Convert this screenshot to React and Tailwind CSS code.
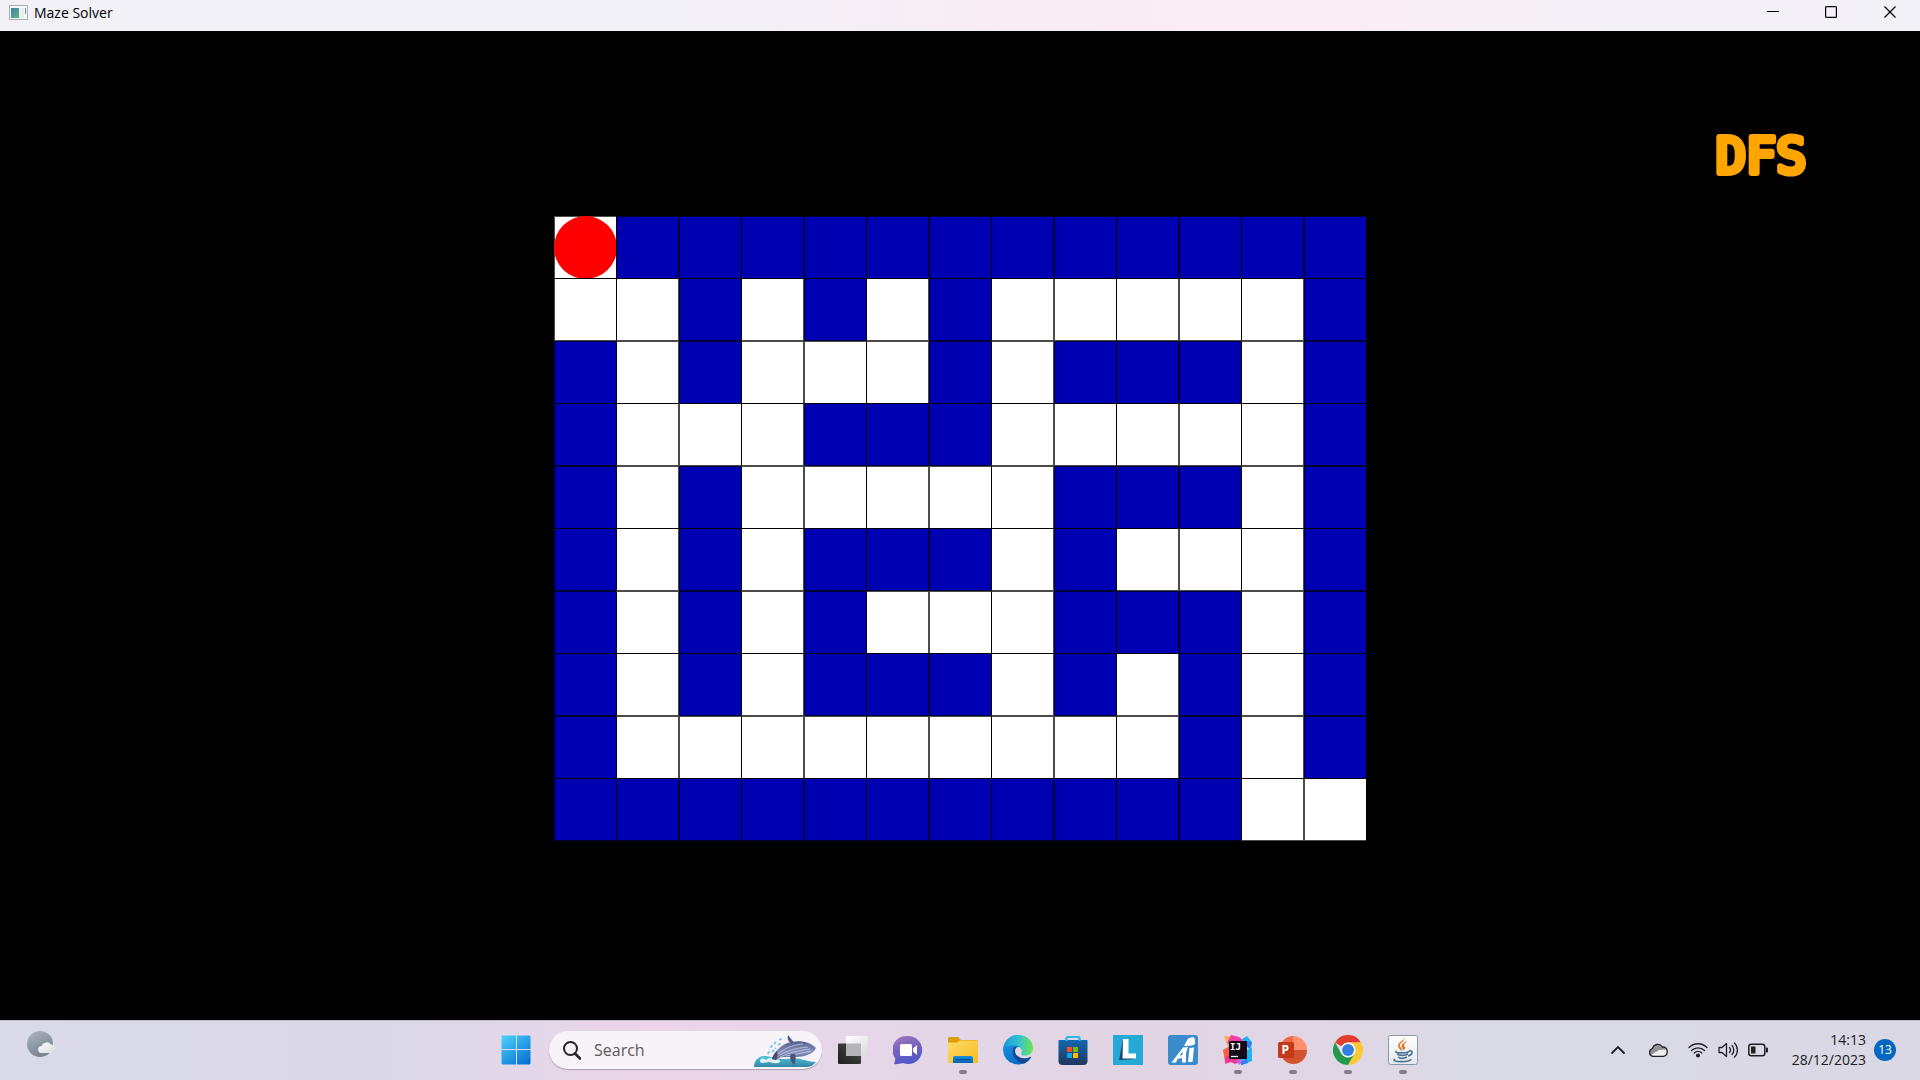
import React from "react";

const MAZE = [
  "0111111111111",
  "0010101000001",
  "1010001011101",
  "1000111000001",
  "1010000011101",
  "1010111010001",
  "1010100011101",
  "1010111010101",
  "1000000000101",
  "1111111111100",
];

function Cell({ row, col, wall }) {
  const vertical = col % 2 ? "border-l border-r border-l-black border-r-black/70" : "border-l border-l-black/70";
  const horizontal = row % 2 ? "border-t border-b border-t-black border-b-black/70" : "border-t border-t-black/70";
  return (
    <div className={`${wall ? "bg-[#0000b3]" : "bg-white"} ${vertical} ${horizontal} relative`}>
      {row === 0 && col === 0 && <div className="absolute -inset-px rounded-full bg-[#ff0000]" />}
    </div>
  );
}

function TitleBar() {
  return (
    <header className="flex h-[31px] items-start bg-[linear-gradient(90deg,#f3f1f8_0%,#f3f1f8_35%,#f8edf5_52%,#fbedf5_68%,#f5f0f7_82%,#f3f1f8_100%)]">
      <div className="flex h-[25px] flex-1 items-center gap-1.5 pl-[9px]">
        <svg width="19" height="15" viewBox="0 0 19 15" aria-hidden="true">
          <defs>
            <linearGradient id="app" x1="0" y1="0" x2="1" y2="1">
              <stop offset="0" stopColor="#4b80a8" />
              <stop offset="1" stopColor="#56b584" />
            </linearGradient>
          </defs>
          <rect x="0.5" y="0.5" width="18" height="14" fill="#f6f8f8" stroke="#a9b0b8" />
          <rect x="2" y="3" width="8" height="10" fill="url(#app)" />
          <rect x="11" y="3" width="4" height="10" fill="#e9eeee" />
          <rect x="16" y="3" width="1" height="6" fill="#55a08c" />
        </svg>
        <h1 className="text-[14px] leading-5 text-black">Maze Solver</h1>
      </div>
      <button aria-label="Minimize" className="grid h-6 w-[58px] place-items-center">
        <svg width="12" height="12" viewBox="0 0 12 12"><path d="M0 5.5h12" stroke="#000" /></svg>
      </button>
      <button aria-label="Maximize" className="grid h-6 w-[58px] place-items-center">
        <svg width="12" height="12" viewBox="0 0 12 12"><rect x="0.6" y="0.6" width="10.8" height="10.8" rx="1" fill="none" stroke="#000" strokeWidth="1.2" /></svg>
      </button>
      <button aria-label="Close" className="grid h-6 w-[60px] place-items-center">
        <svg width="12" height="12" viewBox="0 0 12 12"><path d="M0.5 0.5l11 11M11.5 0.5l-11 11" stroke="#000" strokeWidth="1.2" /></svg>
      </button>
    </header>
  );
}

function TaskButton({ label, running, children }) {
  return (
    <button aria-label={label} className="relative grid h-[60px] w-[55px] place-items-center">
      <svg width="30" height="30" viewBox="0 0 30 30" aria-hidden="true">{children}</svg>
      {running && <span className="absolute bottom-1.5 left-1/2 h-1 w-2 -translate-x-1/2 rounded-full bg-[#857c88]" />}
    </button>
  );
}

function Whale() {
  return (
    <svg width="64" height="32" viewBox="0 0 64 32" aria-hidden="true">
      <defs>
        <linearGradient id="sea" x1="0" y1="0" x2="0" y2="1">
          <stop offset="0" stopColor="#4cc6d8" />
          <stop offset="1" stopColor="#3585a8" />
        </linearGradient>
        <linearGradient id="whale" x1="0" y1="0" x2="0" y2="1">
          <stop offset="0" stopColor="#57618f" />
          <stop offset="0.6" stopColor="#8793bd" />
          <stop offset="1" stopColor="#4a5282" />
        </linearGradient>
      </defs>
      <path d="M0 32c0-6 4-11 11-11 7 0 9 3 17 3 9 0 12-1 18 0 6 1 10 3 16 3-2 3-6 5-10 5z" fill="url(#sea)" />
      <path d="M6 26c0-3 4-3 6-1 3-3 8-3 9 0 2-1 6 0 5 2-5 3-9 0-11 0s-4 1-6 1-3-1-3-2z" fill="#e2f2f8" />
      <path d="M14 19l2-4M17 13l1-3M20 9l3-3M25 5l4-2M18 17l4-4M24 10l4-2" stroke="#78c6ee" strokeWidth="1.8" strokeDasharray="3 1.5" fill="none" />
      <path d="M38 8c-4-1-5-4-4-8 2 2 4 5 6 8z" fill="#525a86" />
      <path d="M18 24c2-7 9-15 19-17 11-2 20 1 25 6-2 6-12 9-21 9-9 0-16-1-19 3z" fill="url(#whale)" />
      <path d="M22 21c6-6 14-11 27-12M23 22c7-5 17-9 31-10M26 22c9-4 19-7 30-8M32 21c8-1 16-3 25-5" stroke="#c3cae3" strokeWidth="0.8" fill="none" />
      <path d="M18 24c1-4 3-6 5-8 1 3 1 5-1 9z" fill="#464a75" />
      <path d="M37 19c-2 4 0 8 3 11 2-4 2-8 1-11z" fill="#4b527e" />
    </svg>
  );
}

function Taskbar() {
  return (
    <footer className="grid h-[60px] grid-cols-[1fr_auto_1fr] items-center bg-[linear-gradient(90deg,#dbdae8_0%,#dad8e7_20%,#e2d7e8_28%,#ecd5e8_34%,#e5d7e8_43%,#e1d5e4_58%,#e1d6e5_68%,#dadae5_76%,#d9d8e4_100%)] shadow-[inset_0_1px_0_#c2bcc8]">
      <button aria-label="Weather" className="mb-3 ml-[27px] justify-self-start">
        <svg width="28" height="26" viewBox="0 0 28 26">
          <defs>
            <linearGradient id="moon" x1="0" y1="0" x2="0.5" y2="1"><stop offset="0" stopColor="#aeb7c2" /><stop offset="1" stopColor="#788390" /></linearGradient>
            <linearGradient id="mist" x1="0" y1="0" x2="1" y2="1"><stop offset="0" stopColor="#fff" /><stop offset="1" stopColor="#d8dde2" /></linearGradient>
          </defs>
          <circle cx="13" cy="13" r="13" fill="url(#moon)" />
          <path d="M15 22a3.5 3.5 0 0 1-.5-7 5.500 5.500 0 0 1 9.500-1.500 4.300 4.300 0 0 1 .5 8.500z" fill="url(#mist)" />
        </svg>
      </button>

      <nav aria-label="Taskbar" className="flex items-center pr-0.5">
        <TaskButton label="Start">
          <defs><linearGradient id="win" gradientUnits="userSpaceOnUse" x1="0" y1="0" x2="24" y2="30"><stop offset="0" stopColor="#50d4ff" /><stop offset="1" stopColor="#0673d3" /></linearGradient></defs>
          <path d="M1.500 0.500H15V14H0.500V1.500zM16 0.500H28.500L29.500 1.500V14H16zM0.500 15H15V29.500H1.500L0.500 28.500zM16 15H29.500V28.500L28.500 29.500H16z" fill="url(#win)" />
        </TaskButton>

        <label className="mr-[3px] ml-1.5 flex h-[38px] w-[273px] items-center overflow-hidden rounded-full bg-[#f8f2f9] pl-3.5 shadow-[0_1px_1px_#a99fb0]">
          <svg width="18" height="19" viewBox="0 0 18 19" aria-hidden="true">
            <circle cx="7.500" cy="7.500" r="6.500" fill="none" stroke="#252329" strokeWidth="2" />
            <path d="M12 12.500l5 5" stroke="#252329" strokeWidth="2.600" strokeLinecap="round" />
          </svg>
          <input aria-label="Search" placeholder="Search" className="ml-[13px] min-w-0 flex-1 bg-transparent text-[16px] text-[#5d5960] outline-none placeholder:text-[#5d5960]" />
          <span className="mr-1 self-end pb-0.5"><Whale /></span>
        </label>

        <TaskButton label="Task view">
          <defs>
            <linearGradient id="tv1" x1="0" y1="1" x2="1" y2="0"><stop offset="0" stopColor="#1f1f1f" /><stop offset="1" stopColor="#4c4c4c" /></linearGradient>
            <linearGradient id="tv2" x1="0" y1="0" x2="1" y2="1"><stop offset="0" stopColor="#fff" /><stop offset="1" stopColor="#dcd9de" /></linearGradient>
          </defs>
          <rect x="0" y="8.500" width="23" height="20.500" rx="1" fill="url(#tv1)" />
          <rect x="8" y="1" width="22" height="20" rx="1" fill="url(#tv2)" />
          <rect x="8" y="8.500" width="15" height="12.500" fill="#b5b4b6" />
        </TaskButton>

        <TaskButton label="Chat">
          <defs><linearGradient id="chat" x1="0" y1="0" x2="0.300" y2="1"><stop offset="0" stopColor="#a377bd" /><stop offset="0.500" stopColor="#7964be" /><stop offset="1" stopColor="#5059c9" /></linearGradient></defs>
          <path d="M15 1a14 14 0 1 1-5 27c-3 1-7 1.500-9 1 1-2 1.500-4 1-6A14 14 0 0 1 15 1z" fill="url(#chat)" />
          <rect x="7" y="9" width="12" height="12" rx="1.500" fill="#fff" />
          <path d="M20 13.500l4-3.500v10l-4-3.500z" fill="#fff" />
        </TaskButton>

        <TaskButton label="File Explorer" running>
          <defs>
            <linearGradient id="fold" x1="0" y1="0" x2="1" y2="1"><stop offset="0" stopColor="#ffda65" /><stop offset="1" stopColor="#f9bd20" /></linearGradient>
            <linearGradient id="tray" x1="0" y1="0" x2="0" y2="1"><stop offset="0" stopColor="#168fdd" /><stop offset="1" stopColor="#0862b5" /></linearGradient>
          </defs>
          <path d="M0 4a2 2 0 0 1 2-2h8l3 3h15a2 2 0 0 1 2 2v3H0z" fill="#dd9b09" />
          <path d="M0 7.500h9l3-2h17l1 1V28H0z" fill="url(#fold)" />
          <path d="M5 28v-5a2 2 0 0 1 2-2h16a2 2 0 0 1 2 2v5z" fill="url(#tray)" />
          <path d="M8 24.500h14" stroke="#064b91" />
        </TaskButton>

        <TaskButton label="Microsoft Edge">
          <defs>
            <linearGradient id="eg1" x1="0" y1="0.500" x2="1" y2="0.500"><stop offset="0" stopColor="#1897d8" /><stop offset="0.550" stopColor="#35c6ce" /><stop offset="1" stopColor="#70e545" /></linearGradient>
            <linearGradient id="eg2" x1="0" y1="0" x2="0.600" y2="1"><stop offset="0" stopColor="#1b9fe2" /><stop offset="1" stopColor="#0869c7" /></linearGradient>
          </defs>
          <path d="M0 15A15 15 0 0 1 15 0l8 12-3 9 8 1a15 15 0 0 1-28-7z" fill="url(#eg2)" />
          <path d="M0.500 13C1.500 5 8 0 15.500 0 24 0 30 6 30 13c0 5-3.500 7.500-8 7.500-4 0-5-1.500-4-3.500 1.500-5-4-7.500-9-6.500-3.500.5-7 2-8.500 2.500z" fill="url(#eg1)" />
          <path d="M11 12c-4 7 1 15 10 16.700 3-1.300 6-4 7.500-7.200-6 3.500-12 2-15-2.500-1.600-2.500-1-5 .5-7z" fill="#124b93" />
          <path d="M18.500 17.500c-.8 2 .6 3.500 4 3.500 3 0 4.500-.3 5.500-.5l-1 1.500c-5 2.500-11 1-14-2.500-1.800-3-1-7 2-7.500 3 0 4.500 3 3.500 5.500z" fill="#e2d7e6" />
        </TaskButton>

        <TaskButton label="Microsoft Store">
          <defs><linearGradient id="store" x1="0" y1="0" x2="0" y2="1"><stop offset="0" stopColor="#1267ae" /><stop offset="1" stopColor="#20365d" /></linearGradient></defs>
          <path d="M8.500 8V3a1 1 0 0 1 1-1h11a1 1 0 0 1 1 1v5" fill="none" stroke="#31b8ed" strokeWidth="2" />
          <path d="M.5 6a.8.8 0 0 1 1-1h27a.8.8 0 0 1 1 1v20a4 4 0 0 1-4 4h-21a4 4 0 0 1-4-4z" fill="url(#store)" />
          <path d="M8.500 6V3M21.500 6V3" stroke="#31b8ed" strokeWidth="2" />
          <rect x="9" y="12" width="5" height="5" fill="#f25022" /><rect x="15" y="12" width="5" height="5" fill="#7fba00" />
          <rect x="9" y="18" width="5" height="5" fill="#00a4ef" /><rect x="15" y="18" width="5" height="5" fill="#ffb900" />
        </TaskButton>

        <TaskButton label="Lenovo">
          <rect width="30" height="30" fill="#27a9d8" />
          <path d="M10 4L6 25l17-1-13-3z" fill="#124a77" />
          <path d="M10 4h5.500v14.500H23V23.500H9.500z" fill="#fff" />
        </TaskButton>

        <TaskButton label="System assistant">
          <rect width="30" height="30" rx="3" fill="#3c8ccc" />
          <path d="M20 3.500l5-1.500 2 2v5l-3 1.500-8 .5z" fill="#fff" />
          <path d="M15 12.500l5-.5-2 6v9.500h-4V23l-4.500 1L8 27.500H3.500z" fill="#fff" />
          <path d="M14.500 16.500l-3 4 3-.5z" fill="#3c8ccc" />
          <path d="M21.500 13l4.500-.5L24.500 27H20z" fill="#fff" />
        </TaskButton>

        <TaskButton label="IntelliJ IDEA" running>
          <path d="M1 1l9 1 5 4-10 9-4 4 4-7z" fill="#fcae4d" />
          <path d="M0 15l7-4 1 12-6 4z" fill="#ff5c43" />
          <path d="M8 0l8 2 6 5-10 6-8-5z" fill="#f33ba5" />
          <path d="M19 4l5-3 5 6-1 8-7-6zM29 13v13l-10 4-5-5 10-10z" fill="#1eb5f2" />
          <path d="M20 6l9 1-3 7zM18 26l6-2 1 4-7 2z" fill="#347af0" />
          <path d="M2 29l1-8 5-1 11 6-7 3-4-2z" fill="#f23595" />
          <path d="M13 25h8l-5 5z" fill="#bf65df" />
          <rect x="6" y="6" width="18" height="18" fill="#120b17" />
          <text x="7" y="15" fontSize="9" fontWeight="700" fontFamily="DejaVu Sans Mono, monospace" fill="#fff">IJ</text>
          <path d="M8 21.500h7" stroke="#fff" strokeWidth="1.300" />
        </TaskButton>

        <TaskButton label="PowerPoint" running>
          <path d="M15 1a14 14 0 0 1 14 14H15z" fill="#ff8f6b" />
          <path d="M2 15h27a13.500 14 0 0 1-27 0z" fill="#d35230" />
          <path d="M15 1v14H2A13 14 0 0 1 15 1z" fill="#ed6c47" />
          <rect x="0" y="7" width="16" height="16" rx="1.500" fill="#c13b1b" />
          <text x="3.500" y="19" fontSize="12" fontWeight="700" fontFamily="Open Sans, sans-serif" fill="#fff">P</text>
        </TaskButton>

        <TaskButton label="Google Chrome" running>
          <path d="M15 15L2 7.500A15 15 0 0 1 28 7.500H15z" fill="#e33b2e" />
          <path d="M28 7.500A15 15 0 0 1 15 30l6.500-11.200L15 7.500z" fill="#fcc934" />
          <path d="M2 7.500A15 15 0 0 0 15 30l6.500-11.200L15 15 8.500 18.800z" fill="#24994c" />
          <circle cx="15" cy="15" r="7.500" fill="#fff" /><circle cx="15" cy="15" r="6" fill="#347fe6" />
        </TaskButton>

        <TaskButton label="Java" running>
          <defs><linearGradient id="jv" x1="0" y1="0" x2="0" y2="1"><stop offset="0" stopColor="#fff" /><stop offset="1" stopColor="#e5e8eb" /></linearGradient></defs>
          <rect x="0.500" y="0.500" width="29" height="29" rx="2" fill="url(#jv)" stroke="#8797a8" />
          <path d="M16 2c2.500 4-7 7-3.500 10 2 2 1.500 3 1.500 4-2-1.500-5-4-3.500-7C12 6 17 5 16 2zM19.500 6.500c-3 1.500-4 3-3 4.500s1 3-1.500 4.500c.5-2-2.500-3.500-1-6 1-1.500 3-3 5.500-3z" fill="#e37a2c" />
          <path d="M8.500 16c-4 2.500 12 2.500 12.500 0M9 19c2 1.800 8 1.800 11 0M10 22c2 1.800 6 1.800 9 0M7 24c-6 3.500 17 3.500 16 0M21 16c5-1 3.500 4-1 5" fill="none" stroke="#4d7196" strokeWidth="1.600" />
        </TaskButton>
      </nav>

      <div className="flex items-center justify-self-end pr-6 text-[#202024]">
        <button aria-label="Show hidden icons" className="mr-[22px]">
          <svg width="16" height="10" viewBox="0 0 16 10"><path d="M2 8l6-6 6 6" fill="none" stroke="#202024" strokeWidth="1.800" strokeLinecap="round" /></svg>
        </button>
        <button aria-label="OneDrive" className="mr-5">
          <svg width="20" height="16" viewBox="0 0 20 16">
            <path d="M5 14.500a4 4 0 0 1-.5-8A5.500 5.500 0 0 1 14.500 5a4.800 4.800 0 0 1 1 9.500z" fill="#eeedf0" />
            <path d="M1.500 9c.5-2 1.500-2.500 3-2.500C6 2 12 1 14.500 5L18 7.500 11 8 3 13z" fill="#929198" />
            <path d="M5 14.300a4 4 0 0 1-.5-7.800A5.500 5.500 0 0 1 14.500 5a4.700 4.700 0 0 1 1 9.300z" fill="none" stroke="#202024" strokeWidth="1.300" />
          </svg>
        </button>
        <button aria-label="Network, sound and battery" className="mr-6 flex items-center gap-2.5">
          <svg width="20" height="16" viewBox="0 0 20 16" fill="none" stroke="#202024" strokeWidth="1.300" strokeLinecap="round">
            <path d="M1 5.500a12.700 12.700 0 0 1 18 0M3.500 8.500a9.200 9.200 0 0 1 13 0M6.200 11a5.400 5.400 0 0 1 7.600 0" />
            <circle cx="10" cy="13.500" r="1.400" fill="#202024" />
          </svg>
          <svg width="20" height="18" viewBox="0 0 20 18" fill="none" stroke="#202024" strokeWidth="1.300" strokeLinecap="round" strokeLinejoin="round">
            <path d="M1 6.500h3L8.500 2.500v13L4 11.500H1zM11.500 6.500a3.500 3.500 0 0 1 0 5M14 4.500a6.500 6.500 0 0 1 0 9M16.500 2a9.800 9.800 0 0 1 0 14" />
          </svg>
          <svg width="20" height="14" viewBox="0 0 20 14">
            <rect x="0.800" y="1.300" width="16" height="11.400" rx="2.500" fill="none" stroke="#202024" strokeWidth="1.500" />
            <rect x="3" y="3.500" width="4.500" height="7" rx="0.500" fill="#202024" />
            <path d="M18 4.500h1a1 1 0 0 1 1 1v3a1 1 0 0 1-1 1h-1z" fill="#202024" />
          </svg>
        </button>
        <button className="mr-2 text-right text-[14px] leading-5">
          <time className="block">14:13</time>
          <time className="block">28/12/2023</time>
        </button>
        <button aria-label="13 notifications" className="grid size-[22px] place-items-center rounded-full bg-[#0567c0] text-[12px] leading-4 text-white">13</button>
      </div>
    </footer>
  );
}

export default function App() {
  return (
    <div className="flex min-h-screen flex-col bg-black font-['Open_Sans','Noto_Sans',sans-serif]">
      <TitleBar />
      <main className="grid flex-1 grid-cols-[1fr_auto_1fr] bg-black">
        <div role="img" aria-label="Maze" className="col-start-2 mt-1.5 grid grid-cols-[repeat(6,62px_63px)_62px] grid-rows-[repeat(5,62px_63px)] self-center">
          {MAZE.map((line, row) =>
            [...line].map((c, col) => <Cell key={`${row}-${col}`} row={row} col={col} wall={c === "1"} />)
          )}
        </div>
        <svg width="100" height="60" viewBox="0 0 100 60" className="col-start-3 mt-[94px] mr-[105px] justify-self-end">
          <text x="1" y="48" fontSize="50" fontFamily="DejaVu Sans Mono, monospace" fill="#ffa500" stroke="#ffa500" strokeWidth="6" strokeLinejoin="round" strokeLinecap="round">DFS</text>
        </svg>
      </main>
      <Taskbar />
    </div>
  );
}
